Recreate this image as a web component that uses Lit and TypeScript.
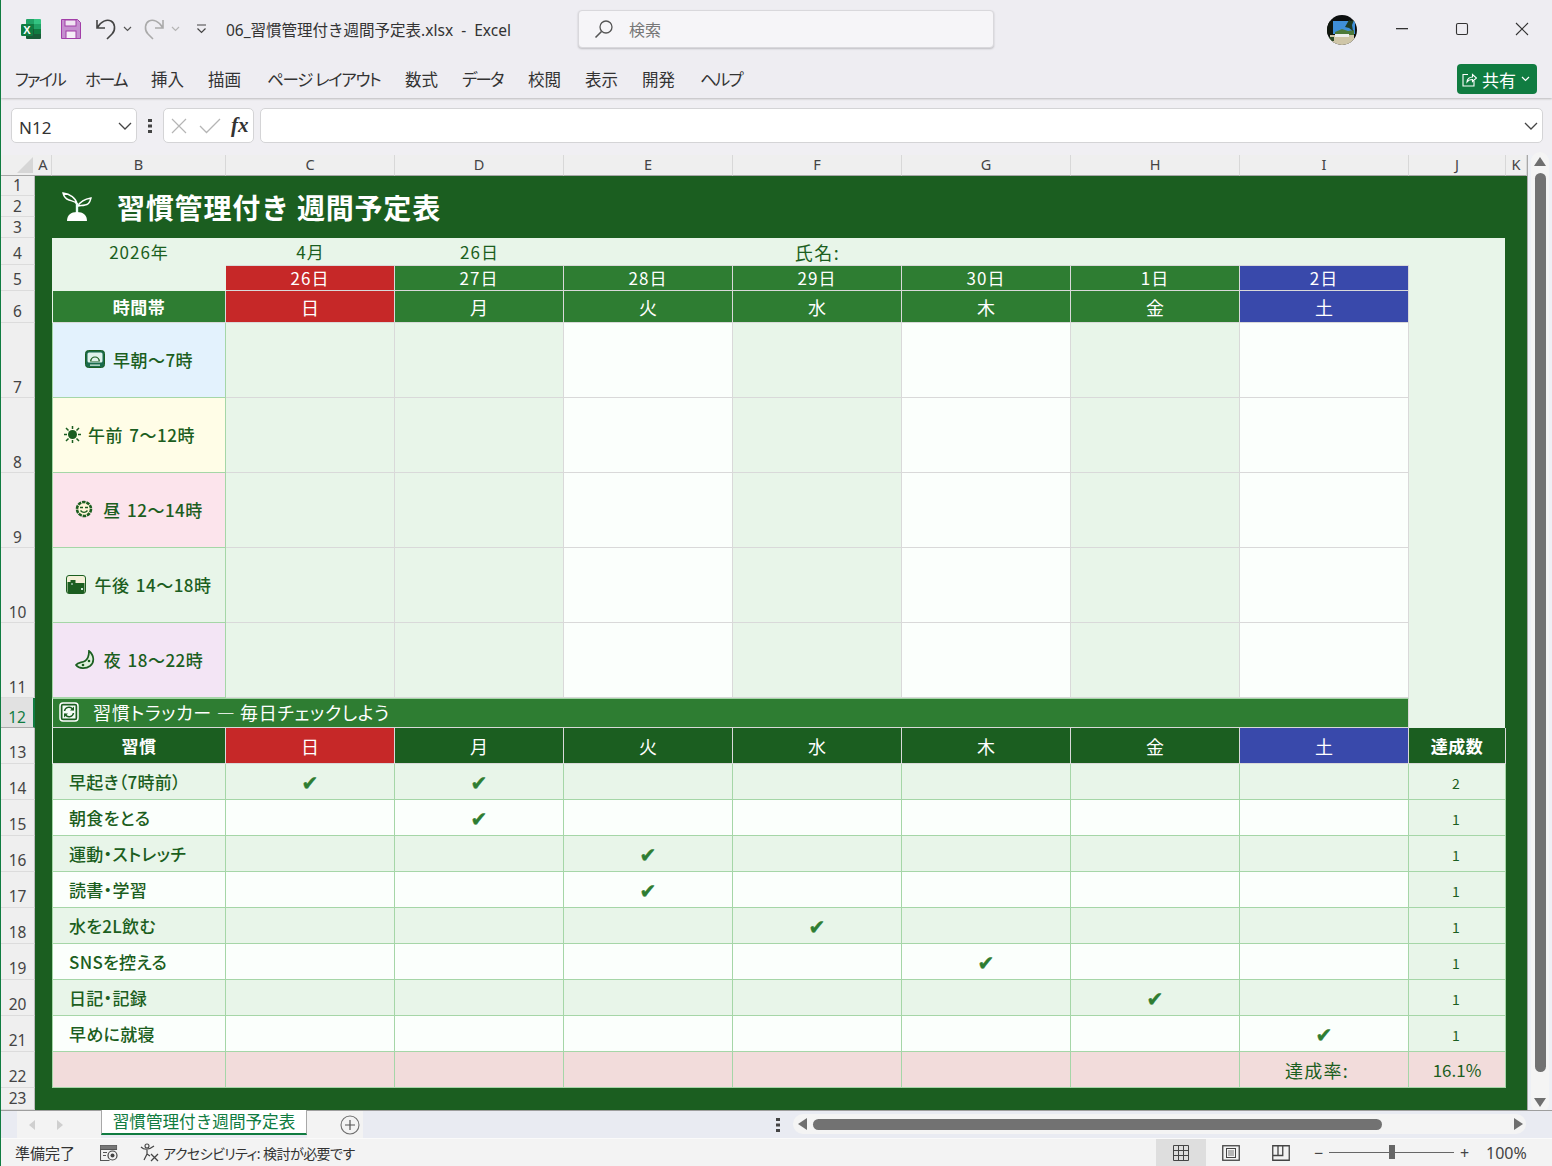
import { LitElement, html, css, svg, type TemplateResult } from "lit";
import { customElement } from "lit/decorators.js";

const DAYS = ["日", "月", "火", "水", "木", "金", "土"];
const DATES = ["26日", "27日", "28日", "29日", "30日", "1日", "2日"];
const COLS = ["A", "B", "C", "D", "E", "F", "G", "H", "I", "J", "K"];
const TABS = [
  { label: "ファイル", cls: "kana" },
  { label: "ホーム", cls: "kana" },
  { label: "挿入", cls: "" },
  { label: "描画", cls: "" },
  { label: "ページ レイアウト", cls: "kana-long" },
  { label: "数式", cls: "" },
  { label: "データ", cls: "kana" },
  { label: "校閲", cls: "" },
  { label: "表示", cls: "" },
  { label: "開発", cls: "" },
  { label: "ヘルプ", cls: "kana" },
];

const HABITS: { name: string; done: number[]; count: number }[] = [
  { name: "早起き（7時前）", done: [0, 1], count: 2 },
  { name: "朝食をとる", done: [1], count: 1 },
  { name: "運動・ストレッチ", done: [2], count: 1 },
  { name: "読書・学習", done: [2], count: 1 },
  { name: "水を2L飲む", done: [3], count: 1 },
  { name: "SNSを控える", done: [4], count: 1 },
  { name: "日記・記録", done: [5], count: 1 },
  { name: "早めに就寝", done: [6], count: 1 },
];

const icon = (w: number, h: number, body: TemplateResult) =>
  html`<svg width=${w} height=${h} viewBox="0 0 ${w} ${h}" fill="none">${body}</svg>`;

const DG = "#1b5e20";

const ICONS = {
  excel: icon(22, 22, svg`
    <path d="M7 1h7v5H6V2a1 1 0 0 1 1-1z" fill="#21a366"/>
    <path d="M14 1h6a1 1 0 0 1 1 1v4h-7z" fill="#33c481"/>
    <rect x="6" y="6" width="8" height="5" fill="#107c41"/>
    <rect x="14" y="6" width="7" height="5" fill="#21a366"/>
    <rect x="6" y="11" width="8" height="5" fill="#185c37"/>
    <rect x="14" y="11" width="7" height="5" fill="#107c41"/>
    <path d="M6 16h15v4a1 1 0 0 1-1 1H7a1 1 0 0 1-1-1z" fill="#185c37"/>
    <rect x="1" y="6" width="12" height="12" rx="1.2" fill="#107c41"/>
    <text x="7" y="16" text-anchor="middle" font-family="Liberation Sans" font-weight="700" font-size="11" fill="#fff">X</text>`),
  save: icon(20, 20, svg`
    <path d="M.5.5h16l3 3v16H.5z" fill="#c58fcf" stroke="#a23fa8"/>
    <rect x="4" y="1" width="11" height="6" fill="#f0e4f2" stroke="#a23fa8"/>
    <rect x="5" y="12" width="10" height="7.5" fill="#f6eef7" stroke="#a23fa8"/>`),
  undo: icon(22, 22, svg`
    <path d="M2 2v8h8M2 10C6 3 12 1 16 3s5 9 1 13l-5 5" stroke="#444" stroke-width="1.6"/>`),
  redo: icon(22, 22, svg`
    <path d="M20 2v8h-8M20 10C16 3 10 1 6 3S1 12 5 16l5 5" stroke="#aaa" stroke-width="1.6"/>`),
  chevron: icon(9, 6, svg`<path d="M1 1l3.5 3.5L8 1" stroke="#555" stroke-width="1.2"/>`),
  chevronLight: icon(9, 6, svg`<path d="M1 1l3.5 3.5L8 1" stroke="#b5b5b5" stroke-width="1.2"/>`),
  chevronWhite: icon(9, 6, svg`<path d="M1 1l3.5 3.5L8 1" stroke="#fff" stroke-width="1.2"/>`),
  qat: icon(11, 10, svg`<path d="M1 1h9M1.5 4.500l4 4 4-4" stroke="#444" stroke-width="1.2"/>`),
  search: icon(20, 20, svg`
    <circle cx="12" cy="8" r="6" stroke="#555" stroke-width="1.3"/>
    <path d="M7.5 12.500L1.500 18.500" stroke="#555" stroke-width="1.6"/>`),
  min: icon(14, 2, svg`<rect x="1" width="12" height="1.3" fill="#333"/>`),
  max: icon(14, 14, svg`<rect x="1.500" y="1.500" width="11" height="11" rx="1.500" stroke="#333" stroke-width="1.100"/>`),
  close: icon(14, 14, svg`<path d="M1 1l12 12M13 1L1 13" stroke="#333" stroke-width="1.100"/>`),
  share: icon(15, 15, svg`
    <path d="M6 2.500H1V14h11V9" stroke="#fff" stroke-width="1.100"/>
    <path d="M5 10c0-3 2.500-5 5.500-5V2.500L14.500 6l-4 3.500V7.500C8 7.500 6 8.500 5 10z" stroke="#fff" stroke-width="1.100"/>`),
  avatar: icon(30, 30, svg`
    <defs><clipPath id="av"><circle cx="15" cy="15" r="15"/></clipPath></defs>
    <g clip-path="url(#av)">
      <rect width="30" height="30" fill="#0c0f10"/>
      <rect x="4" y="6" width="24" height="13" fill="#3f8fd8"/>
      <path d="M8 17l7-3 6 2 6-1v5H8z" fill="#4d7a3a"/>
      <path d="M18 12l4-7 2 1 3-1-2 5 1 6-4-3z" fill="#1f3b22"/>
      <path d="M0 6h6v14H0z" fill="#10170f"/>
      <rect x="3" y="20" width="24" height="10" fill="#cfc6a8"/>
      <rect x="8" y="19" width="14" height="3" fill="#eee"/>
      <rect x="0" y="22" width="7" height="4" fill="#2d4a28"/>
    </g>`),
  cross: icon(18, 18, svg`<path d="M2 2l14 14M16 2L2 16" stroke="#b5b5b5" stroke-width="1.2"/>`),
  tick: icon(22, 16, svg`<path d="M1 8l6.500 6.500L21 1" stroke="#b5b5b5" stroke-width="1.300"/>`),
  nameChev: icon(14, 8, svg`<path d="M1 1l6 6 6-6" stroke="#444" stroke-width="1.3"/>`),
  sprout: icon(30, 30, svg`
    <path d="M15 12c-1-6-7-10-14-11 1 4 3 6 6 7 3 1 6 1 8 4z" stroke="#fff" stroke-width="1.400" fill="${DG}"/>
    <path d="M16 14c2-4 7-7 13-8-1 4-3 7-6 7-3 1-5 0-7 1z" stroke="#fff" stroke-width="1.400" fill="${DG}"/>
    <path d="M15 11v10" stroke="#e8fff8" stroke-width="2.400"/>
    <path d="M5 29c0-6 4-9 10-9s10 3 10 9z" fill="#fff"/>`),
  sunrise: icon(20, 18, svg`
    <rect x=".5" y=".5" width="19" height="17" rx="3" fill="#1b6b4c" stroke="${DG}"/>
    <rect x="2.500" y="2.500" width="15" height="10" rx="1.500" fill="#e0f1ec"/>
    <path d="M5 11.500a5 5 0 0 1 10 0z" fill="${DG}"/>
    <path d="M6.500 11a3.500 3.500 0 0 1 7 0z" fill="#e0f1ec"/>
    <rect x="5" y="14.500" width="10" height="1.300" fill="#cfe8d8"/>`),
  sun: icon(17, 17, svg`
    <circle cx="8.500" cy="8.500" r="4.500" fill="${DG}"/>
    <path d="M8.500 0v3M8.500 14v3M0 8.500h3M14 8.500h3M2 2l2.500 2.500M12.500 12.500L15 15M15 2l-2.500 2.500M4.500 12.500L2 15" stroke="${DG}" stroke-width="1.500"/>`),
  smile: icon(18, 18, svg`
    <circle cx="9" cy="9" r="7" fill="#fff6d8" stroke="${DG}" stroke-width="2.600" stroke-dasharray="3.500 .9"/>
    <path d="M5 7.500h3M10 7.500h3" stroke="${DG}" stroke-width="1.300"/>
    <path d="M5.500 10.500c2 2.500 5 2.500 7 0" stroke="${DG}" stroke-width="1.300"/>`),
  sunset: icon(20, 19, svg`
    <rect x=".5" y=".5" width="19" height="18" rx="2.500" fill="#f3f0d8" stroke="${DG}"/>
    <path d="M1.500 17.500V7h3V5h5v3h9v10H2z" fill="${DG}"/>
    <rect x="15" y="13" width="2" height="2" fill="#cfe8d8"/>
    <rect x="5" y="8" width="2" height="2" fill="#7fa888"/>`),
  moon: icon(20, 19, svg`
    <path d="M14 1C19 5 20 12 15 16C11 19 4 19 1 15C3 12 7 13 10 11C13 9 14 5 14 1z" fill="#dff0dc" stroke="${DG}" stroke-width="1.700"/>
    <circle cx="8" cy="15" r="1.300" fill="${DG}"/><circle cx="14" cy="11" r="1.300" fill="${DG}"/>`),
  cycle: icon(20, 20, svg`
    <rect x="1" y="1" width="18" height="18" rx="3" fill="${DG}" stroke="#fff" stroke-width="1.500"/>
    <rect x="3.500" y="3.500" width="13" height="13" fill="#f4fbf6"/>
    <path d="M5.500 9a4.500 4.500 0 0 1 8-2l1 1M14.500 11a4.500 4.500 0 0 1-8 2l-1-1" stroke="${DG}" stroke-width="1.500"/>
    <path d="M15 4.500v4h-4zM5 15.500v-4h4z" fill="${DG}"/>`),
  arrowL: icon(7, 10, svg`<path d="M6 0v10L0 5z" fill="#cfcfcf"/>`),
  arrowR: icon(7, 10, svg`<path d="M1 0v10l6-5z" fill="#cfcfcf"/>`),
  plus: icon(20, 20, svg`
    <circle cx="10" cy="10" r="9" stroke="#6f6f6f" stroke-width="1.100"/>
    <path d="M10 5v10M5 10h10" stroke="#555" stroke-width="1.200"/>`),
  dots: icon(4, 14, svg`<path d="M0 0h4v3H0zM0 5.500h4v3H0zM0 11h4v3H0z" fill="#444"/>`),
  scrollL: icon(9, 12, svg`<path d="M9 0v12L0 6z" fill="#6f6f6f"/>`),
  scrollR: icon(9, 12, svg`<path d="M0 0v12l9-6z" fill="#6f6f6f"/>`),
  scrollU: icon(12, 9, svg`<path d="M0 9h12L6 0z" fill="#6f6f6f"/>`),
  scrollD: icon(12, 9, svg`<path d="M0 0h12L6 9z" fill="#6f6f6f"/>`),
  macro: icon(18, 16, svg`
    <path d="M.5.500h16v4H.5zM.5 4.500v11h9" stroke="#555" stroke-width="1.100"/>
    <rect x=".5" y=".5" width="16" height="3.500" fill="#777"/>
    <path d="M3 7.500h4M3 10.500h3" stroke="#555"/>
    <circle cx="12.500" cy="10.500" r="4.500" fill="#f3f3f3" stroke="#444" stroke-width="1.200"/>
    <circle cx="12.500" cy="10.500" r="2" fill="#444"/>`),
  access: icon(20, 19, svg`
    <circle cx="7" cy="3" r="2" stroke="#444" stroke-width="1.100"/>
    <path d="M1 4c3 3 8 3 13-1M7 7v4l-3 6M7 11l3 2" stroke="#444" stroke-width="1.200"/>
    <path d="M11 11l7 7M18 11l-7 7" stroke="#444" stroke-width="1.300"/>`),
  viewGrid: icon(16, 16, svg`
    <path d="M.5.500h15v15H.5zM5.500.500v15M10.500.500v15M.5 5.500h15M.5 10.500h15" stroke="#444"/>`),
  viewPage: icon(18, 16, svg`
    <rect x=".75" y=".75" width="16.500" height="14.500" stroke="#444" stroke-width="1.300"/>
    <rect x="4.500" y="3.500" width="9" height="9" stroke="#444"/>
    <path d="M6 6h6M6 8h6M6 10h6" stroke="#777"/>`),
  viewBreak: icon(18, 16, svg`
    <path d="M.75 15.250V.75h16.500v14.500zM.75 10.500h10V.75M6 .75v9" stroke="#444" stroke-width="1.300"/>`),
};

@customElement("app-root")
export class AppRoot extends LitElement {
  static styles = css`
    :host {
      display: block;
      width: 1552px;
      height: 1166px;
      overflow: hidden;
      position: relative;
      box-sizing: border-box;
      border-left: 1px solid #107c41;
      background: #f0eff3;
      color: #333;
      font-family: "Noto Sans", "Noto Sans CJK JP", sans-serif;
      font-feature-settings: "palt";
    }

    /* title bar and ribbon tabs */
    .chrome {
      height: 98px;
      background: #eeedf2;
      box-shadow: 0 1px 2px rgba(0, 0, 0, 0.22);
      position: relative;
    }
    .titlebar {
      height: 58px;
      display: flex;
      align-items: center;
      padding-left: 19px;
    }
    .logo { display: flex; margin-right: 19px; }
    .save { display: flex; margin-right: 14px; }
    .undo { display: flex; margin-right: 6px; }
    .qat-chev { display: flex; margin-right: 11px; }
    .qat-chev.last { margin-right: 16px; }
    .qat-last { display: flex; margin-right: 19px; }
    .file { width: 352px; font-size: 15.500px; color: #333; white-space: pre; font-feature-settings: normal; }
    .search {
      width: 416px;
      height: 38px;
      box-sizing: border-box;
      border: 1px solid #d9d8dc;
      border-radius: 4px;
      background: #f6f5f8;
      box-shadow: 0 1px 2px rgba(0, 0, 0, 0.2);
      display: flex;
      align-items: center;
      padding-left: 15px;
      gap: 15px;
      font-size: 16px;
      color: #777;
    }
    .search-icon { display: flex; }
    .avatar { display: flex; margin-left: 333px; margin-top: 1px; }
    .winbtn { width: 60px; display: flex; justify-content: center; align-items: center; }
    .avatar + .winbtn { margin-left: 15px; }
    .tabs {
      height: 40px;
      display: grid;
      grid-template-columns: 70px 66px 57px 59px 138px 57px 66px 57px 57px 58px 60px;
      padding: 2px 0 0 14px;
      box-sizing: border-box;
      align-items: center;
      font-size: 16.500px;
      color: #333;
    }
    .tabs span { white-space: pre; }
    .tabs span.kana { letter-spacing: -1.800px; }
    .tabs span.kana-long { letter-spacing: -1.300px; }
    .share {
      position: absolute;
      right: 15px;
      top: 64px;
      width: 80px;
      height: 30px;
      border-radius: 4px;
      background: #107c41;
      color: #fff;
      font-size: 17px;
      display: flex;
      align-items: center;
      padding-left: 5px;
      gap: 5px;
      box-sizing: border-box;
    }
    .share svg { flex: none; }

    /* formula bar */
    .formula {
      height: 57px;
      display: flex;
      padding: 10px 9px 0 10px;
      box-sizing: border-box;
      align-items: flex-start;
    }
    .box {
      height: 35px;
      box-sizing: border-box;
      background: #fff;
      border: 1px solid #d4d4d6;
      border-radius: 5px;
      display: flex;
      align-items: center;
    }
    .namebox {
      width: 126px;
      justify-content: space-between;
      padding: 0 4px 0 7px;
      font-size: 17px;
      color: #333;
    }
    .namebox span { padding-top: 3px; }
    .fdots { width: 26px; height: 35px; display: flex; justify-content: center; align-items: center; }
    .fbtns { width: 91px; padding-left: 6px; gap: 11px; }
    .fx {
      font-family: "Liberation Serif", serif;
      font-style: italic;
      font-weight: 700;
      font-size: 21px;
      color: #333;
      margin-left: -1px;
    }
    .finput { flex: 1; margin-left: 6px; justify-content: flex-end; padding-right: 4px; }

    /* sheet area */
    .work { display: flex; height: 955px; }
    .sheet {
      display: grid;
      width: 1526px;
      grid-template-columns: 34px 17px 174px repeat(7, 169px) 97px 21px;
      grid-template-rows: 21px 20px 21px 21px 27px 26px 32px repeat(5, 75px) 30px 36px repeat(9, 36px) 22px;
      background: #1b5e20;
    }
    .corner {
      background: #efefef;
      border-bottom: 1px solid #a8a8a8;
      box-sizing: border-box;
      display: flex;
      justify-content: flex-end;
      align-items: flex-start;
      padding: 2px 2px 0 0;
    }
    .tri { width: 0; height: 0; border-style: solid; border-width: 0 0 16px 16px; border-color: transparent transparent #d6d6d6 transparent; }
    .colh {
      background: #efefef;
      border-right: 1px solid #d8d8d8;
      border-bottom: 1px solid #a8a8a8;
      box-sizing: border-box;
      display: flex;
      align-items: center;
      justify-content: center;
      font-size: 14.500px;
      color: #444;
      line-height: 20px;
      padding-bottom: 2px;
    }
    .rowh {
      background: #efefef;
      border-bottom: 1px solid #dcdcdc;
      border-right: 1px solid #bdbdbd;
      box-sizing: border-box;
      display: flex;
      align-items: flex-end;
      justify-content: center;
      padding-bottom: 1px;
      font-size: 15.500px;
      line-height: 20px;
      color: #444;
    }
    .rowh.tight { padding-bottom: 0; }
    .rowh.sel {
      background: #e1e1e1;
      color: #107c41;
      border-right: 2px solid #107c41;
      border-bottom: 1px solid #aaa;
    }

    .cell, .band, .title {
      box-sizing: border-box;
      display: flex;
      align-items: center;
      justify-content: center;
      font-family: "Noto Sans CJK JP", sans-serif;
      color: #1b5e20;
      white-space: pre;
      min-width: 0;
    }
    .title {
      justify-content: flex-start;
      padding-left: 10px;
      gap: 25px;
      color: #fff;
      font-size: 28px;
      letter-spacing: 0.800px;
      font-weight: 700;
      font-feature-settings: normal;
    }
    .title svg { flex: none; }
    .title b { font-weight: 700; }
    .light { background: #e8f5e9; margin-right: 1px; }
    .plain { font-size: 17px; letter-spacing: 1px; }
    .plain.name { font-size: 18px; letter-spacing: 1.500px; }
    .hdr {
      color: #fff;
      font-size: 17px;
      letter-spacing: 1px;
      border-right: 1px solid #d9d9d9;
      border-bottom: 1px solid #d9d9d9;
    }
    .hdr.topline { border-top: 1px solid #d9d9d9; padding-bottom: 2px; }
    .hdr.dow { font-size: 18px; letter-spacing: 0; }
    .green { background: #2e7d32; }
    .red { background: #c62828; }
    .blue { background: #3949ab; }
    .dark { background: #1b5e20; }
    .hdr.bold { font-weight: 700; font-size: 17px; letter-spacing: 0.500px; }
    .hdr.lead { border-left: 1px solid #e8f5e9; }
    .band {
      background: #2e7d32;
      color: #fff;
      justify-content: flex-start;
      padding: 0 0 2px 6px;
      gap: 14px;
      font-size: 18px;
      letter-spacing: 0.700px;
      border-left: 1px solid #e8f5e9;
      border-bottom: 1px solid #d9d9d9;
      border-top: 1px solid #a5d6a7;
      border-right: 1px solid #d9d9d9;
    }
    .slot {
      gap: 8px;
      font-size: 17px;
      font-weight: 500;
      letter-spacing: 0.500px;
      word-spacing: 2px;
      padding-bottom: 2px;
      border-right: 1px solid #a5d6a7;
      border-bottom: 1px solid #a5d6a7;
      border-left: 1px solid #a5d6a7;
      font-feature-settings: normal;
    }
    .slot svg { flex: none; }
    .slot.shift { padding-right: 19px; gap: 7px; }
    .morning { background: #e3f2fd; }
    .forenoon { background: #fffde7; }
    .noon { background: #fce4ec; gap: 10px; }
    .evening { background: #e8f5e9; }
    .night { background: #f3e5f5; gap: 9px; }
    .empty {
      border-right: 1px solid #d9d9d9;
      border-bottom: 1px solid #d9d9d9;
    }
    .tint { background: #e8f5e9; }
    .white { background: #fbfffc; }
    .t {
      border-right: 1px solid #a5d6a7;
      border-bottom: 1px solid #a5d6a7;
    }
    .habit {
      justify-content: flex-start;
      padding-left: 16px;
      font-size: 17px;
      font-weight: 500;
      letter-spacing: 0.300px;
      border-left: 1px solid #a5d6a7;
    }
    .count { font-size: 14px; padding: 2px 2px 0 0; }
    .check {
      font-family: "DejaVu Sans", sans-serif;
      font-size: 20px;
      line-height: 20px;
      color: #2e7d32;
      -webkit-text-stroke: 0.500px #2e7d32;
      position: relative;
      top: 1px;
    }
    .sum { background: #f2dcdb; }
    .sum.lead { border-left: 1px solid #a5d6a7; }
    .rate { font-size: 18px; letter-spacing: 1.300px; padding-right: 14px; }
    .pct { font-size: 17px; font-feature-settings: normal; }

    /* vertical scrollbar */
    .vscroll {
      width: 25px;
      position: relative;
      background: #eef0f5;
      box-sizing: border-box;
      padding: 0 3px 0 3px;
      border-left: 1px solid #a8a8a8;
    }
    .vtrack {
      margin-top: -3px;
      height: 961px;
      background: #f4f4f4;
      border-radius: 9px;
      display: flex;
      flex-direction: column;
      align-items: center;
      padding-top: 5px;
      box-sizing: border-box;
    }
    .vtrack svg { flex: none; }
    .vthumb { width: 11px; height: 899px; margin: 7px 0 26px; border-radius: 6px; background: #727272; }

    /* sheet tabs and horizontal scrollbar */
    .tabbar {
      height: 28px;
      display: flex;
      background: #e9ebf2;
      border-top: 1px solid #9e9e9e;
      box-sizing: border-box;
      position: relative;
    }
    .nav {
      margin-left: 16px;
      width: 84px;
      background: #f3f3f3;
      display: flex;
      align-items: center;
      padding-left: 12px;
      gap: 20px;
      box-sizing: border-box;
      height: 27px;
    }
    .sheettab {
      width: 206px;
      box-sizing: border-box;
      background: #fff;
      border: 1px solid #a8a8a8;
      border-top: 0;
      border-bottom: 2px solid #107c41;
      color: #107c41;
      font-size: 16.600px;
      display: flex;
      align-items: center;
      justify-content: center;
      font-feature-settings: normal;
      line-height: 20px;
      margin-top: -1px;
      height: 25px;
    }
    .addtab {
      width: 56px;
      height: 27px;
      background: #f3f3f3;
      display: flex;
      align-items: center;
      justify-content: center;
      padding-left: 30px;
      box-sizing: border-box;
    }
    .sdots { margin-left: 413px; display: flex; align-items: center; height: 27px; margin-right: 13px; }
    .hscroll {
      width: 733px;
      height: 20px;
      margin-top: 3px;
      background: #f4f4f4;
      border-radius: 10px;
      display: flex;
      align-items: center;
      padding-left: 5px;
      box-sizing: border-box;
    }
    .hscroll svg { flex: none; }
    .hthumb { width: 569px; height: 11px; margin: 0 132px 0 6px; border-radius: 6px; background: #727272; }

    /* status bar */
    .status {
      height: 28px;
      box-sizing: border-box;
      background: #f3f3f3;
      border-top: 1px solid #fafafa;
      display: flex;
      align-items: center;
      padding-left: 14px;
      font-size: 15px;
      color: #333;
    }
    .ready { width: 85px; }
    .status svg { flex: none; }
    .acc { margin-left: 22px; margin-right: 3px; display: flex; }
    .acctext { width: 993px; white-space: pre; font-size: 14px; letter-spacing: -0.550px; }
    .view { width: 50px; height: 27px; display: flex; align-items: center; justify-content: center; }
    .view.on { background: #dedede; }
    .zoom { display: flex; align-items: center; margin-left: 7px; color: #444; }
    .zoom i { font-style: normal; font-size: 16px; width: 11px; text-align: center; line-height: 16px; }
    .slider { width: 125px; height: 1px; background: #666; margin: 0 5px; position: relative; }
    .knob { position: absolute; left: 60px; top: -7px; width: 6px; height: 14px; background: #666; }
    .pctz { margin-left: 16px; font-size: 16px; color: #444; }
  `;

  // grid placement, col/row are 1-based, the header row and column count as one
  private at(col: number, row: number, cs = 1, rs = 1) {
    return `grid-area:${row}/${col}/span ${rs}/span ${cs}`;
  }

  private headers() {
    const rows = Array.from({ length: 23 }, (_, i) => i + 1);
    const tight = (r: number) => r <= 3 || (r >= 7 && r <= 12);
    return html`
      <div class="corner" style=${this.at(1, 1)}><div class="tri"></div></div>
      ${COLS.map((c, i) => html`<div class="colh" style=${this.at(i + 2, 1)}>${c}</div>`)}
      ${rows.map(
        (r) => html`<div class="rowh ${tight(r) ? "tight" : ""} ${r === 12 ? "sel" : ""}" style=${this.at(1, r + 1)}>${r}</div>`
      )}
    `;
  }

  private dayClass(i: number, base = "green") {
    return i === 0 ? "red" : i === 6 ? "blue" : base;
  }

  private schedule() {
    const slots = [
      { cls: "morning", ic: ICONS.sunrise, label: "早朝〜7時" },
      { cls: "forenoon shift", ic: ICONS.sun, label: "午前 7〜12時" },
      { cls: "noon", ic: ICONS.smile, label: "昼 12〜14時" },
      { cls: "evening", ic: ICONS.sunset, label: "午後 14〜18時" },
      { cls: "night", ic: ICONS.moon, label: "夜 18〜22時" },
    ];
    const tinted = [true, true, false, true, false, true, false];
    return html`
      <div class="light" style=${this.at(3, 5, 9, 9)}></div>
      <div class="cell plain" style=${this.at(3, 5)}>2026年</div>
      <div class="cell plain" style=${this.at(4, 5)}>4月</div>
      <div class="cell plain" style=${this.at(5, 5)}>26日</div>
      <div class="cell plain name" style=${this.at(7, 5)}>氏名:</div>
      ${DATES.map(
        (d, i) => html`<div class="cell hdr topline ${this.dayClass(i)}" style=${this.at(i + 4, 6)}>${d}</div>`
      )}
      <div class="cell hdr bold lead green" style=${this.at(3, 7)}>時間帯</div>
      ${DAYS.map(
        (d, i) => html`<div class="cell hdr dow ${this.dayClass(i)}" style=${this.at(i + 4, 7)}>${d}</div>`
      )}
      ${slots.map(
        (s, r) => html`
          <div class="cell slot ${s.cls}" style=${this.at(3, r + 8)}>${s.ic}<span>${s.label}</span></div>
          ${tinted.map(
            (t, i) => html`<div class="cell empty ${t ? "tint" : "white"}" style=${this.at(i + 4, r + 8)}></div>`
          )}
        `
      )}
      <div class="band" style=${this.at(3, 13, 8)}>${ICONS.cycle}<span>習慣トラッカー ― 毎日チェックしよう</span></div>
    `;
  }

  private tracker() {
    return html`
      <div class="cell hdr bold lead dark" style=${this.at(3, 14)}>習慣</div>
      ${DAYS.map(
        (d, i) => html`<div class="cell hdr dow ${this.dayClass(i, "dark")}" style=${this.at(i + 4, 14)}>${d}</div>`
      )}
      <div class="cell hdr bold dark" style=${this.at(11, 14)}>達成数</div>
      ${HABITS.map((h, r) => {
        const bg = r % 2 === 0 ? "tint" : "white";
        return html`
          <div class="cell t habit ${bg}" style=${this.at(3, r + 15)}>${h.name}</div>
          ${DAYS.map(
            (_, i) => html`<div class="cell t ${bg}" style=${this.at(i + 4, r + 15)}>
              ${h.done.includes(i) ? html`<span class="check">✔</span>` : ""}
            </div>`
          )}
          <div class="cell t count tint" style=${this.at(11, r + 15)}>${h.count}</div>
        `;
      })}
      <div class="cell t sum lead" style=${this.at(3, 23)}></div>
      ${DAYS.slice(0, 6).map((_, i) => html`<div class="cell t sum" style=${this.at(i + 4, 23)}></div>`)}
      <div class="cell t sum rate" style=${this.at(10, 23)}>達成率:</div>
      <div class="cell t sum pct" style=${this.at(11, 23)}>16.1%</div>
    `;
  }

  render() {
    return html`
      <div class="chrome">
        <div class="titlebar">
          <span class="logo">${ICONS.excel}</span>
          <span class="save">${ICONS.save}</span>
          <span class="undo">${ICONS.undo}</span>
          <span class="qat-chev">${ICONS.chevron}</span>
          <span class="undo">${ICONS.redo}</span>
          <span class="qat-chev last">${ICONS.chevronLight}</span>
          <span class="qat-last">${ICONS.qat}</span>
          <span class="file">06_習慣管理付き週間予定表.xlsx  -  Excel</span>
          <div class="search"><span class="search-icon">${ICONS.search}</span><span>検索</span></div>
          <span class="avatar">${ICONS.avatar}</span>
          <span class="winbtn">${ICONS.min}</span>
          <span class="winbtn">${ICONS.max}</span>
          <span class="winbtn">${ICONS.close}</span>
        </div>
        <div class="tabs">${TABS.map((t) => html`<span class=${t.cls}>${t.label}</span>`)}</div>
        <div class="share">${ICONS.share}<span>共有</span>${ICONS.chevronWhite}</div>
      </div>

      <div class="formula">
        <div class="box namebox"><span>N12</span>${ICONS.nameChev}</div>
        <div class="fdots">${ICONS.dots}</div>
        <div class="box fbtns">${ICONS.cross}${ICONS.tick}<span class="fx">fx</span></div>
        <div class="box finput">${ICONS.nameChev}</div>
      </div>

      <div class="work">
        <div class="sheet">
          ${this.headers()}
          <div class="title" style=${this.at(3, 2, 9, 3)}>${ICONS.sprout}<b>習慣管理付き 週間予定表</b></div>
          ${this.schedule()}
          ${this.tracker()}
        </div>
        <div class="vscroll">
          <div class="vtrack">${ICONS.scrollU}<div class="vthumb"></div>${ICONS.scrollD}</div>
        </div>
      </div>

      <div class="tabbar">
        <div class="nav">${ICONS.arrowL}${ICONS.arrowR}</div>
        <div class="sheettab">習慣管理付き週間予定表</div>
        <div class="addtab">${ICONS.plus}</div>
        <div class="sdots">${ICONS.dots}</div>
        <div class="hscroll">${ICONS.scrollL}<div class="hthumb"></div>${ICONS.scrollR}</div>
      </div>

      <div class="status">
        <span class="ready">準備完了</span>
        ${ICONS.macro}
        <span class="acc">${ICONS.access}</span>
        <span class="acctext">アクセシビリティ: 検討が必要です</span>
        <span class="view on">${ICONS.viewGrid}</span>
        <span class="view">${ICONS.viewPage}</span>
        <span class="view">${ICONS.viewBreak}</span>
        <div class="zoom">
          <i>−</i><div class="slider"><div class="knob"></div></div><i>+</i>
        </div>
        <span class="pctz">100%</span>
      </div>
    `;
  }
}

declare global {
  interface HTMLElementTagNameMap {
    "app-root": AppRoot;
  }
}
